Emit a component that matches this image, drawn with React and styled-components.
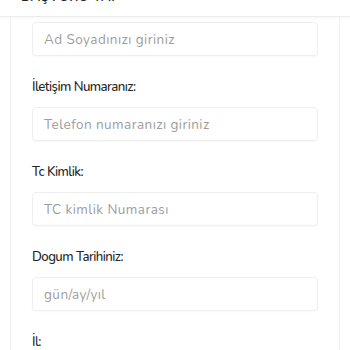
import React from "react";
import styled, { createGlobalStyle } from "styled-components";

const Global = createGlobalStyle`
  html, body { margin: 0; padding: 0; background: #ffffff; }
  body { font-family: "Nunito", Lato, "Noto Sans", sans-serif; overflow: hidden; }
`;

const Header = styled.header`
  height: 16px;
  overflow: hidden;
  background: #fff;
  border-bottom: 1px solid #ececec;
  box-shadow: 0 1px 3px rgba(0,0,0,0.04);
  padding-left: 21px;
  position: relative;
  z-index: 1;
`;

const HeaderTitle = styled.div`
  margin-top: -9px;
  font-size: 13px;
  font-weight: 700;
  letter-spacing: 0.6px;
  color: #222;
  line-height: 12px;
`;

const Card = styled.main`
  margin: 0 10px;
  border-left: 1px solid #f0f0f0;
  border-right: 1px solid #f0f0f0;
  padding: 5px 21px 20px;
  background: #fff;
`;

const Field = styled.div`
  display: flex;
  flex-direction: column;
  padding-top: ${(p) => (p.$first ? "0" : "21px")};
`;

const Label = styled.label`
  font-size: 13.2px;
  font-weight: 500;
  letter-spacing: -0.55px;
  color: #262626;
  line-height: 20px;
  margin-bottom: 10px;
`;

const Input = styled.input`
  box-sizing: border-box;
  height: 34px;
  width: 100%;
  border: 1px solid #efefef;
  border-radius: 4px;
  box-shadow: 0 1px 2px rgba(0,0,0,0.03);
  padding: 0 11px;
  font-family: inherit;
  font-size: 13.5px;
  letter-spacing: 0.45px;
  color: #333;
  background: #fff;
  outline: none;
  &::placeholder { color: #9d9d9d; }
`;

const fields = [
  { label: null, placeholder: "Ad Soyadınızı giriniz" },
  { label: "İletişim Numaranız:", placeholder: "Telefon numaranızı giriniz" },
  { label: "Tc Kimlik:", placeholder: "TC kimlik Numarası" },
  { label: "Dogum Tarihiniz:", placeholder: "gün/ay/yıl" },
];

export default function App() {
  return (
    <>
      <Global />
      <Header>
        <HeaderTitle>BAŞVURU YAP</HeaderTitle>
      </Header>
      <Card>
        {fields.map((f, i) => (
          <Field key={i} $first={i === 0}>
            {f.label && <Label>{f.label}</Label>}
            <Input placeholder={f.placeholder} />
          </Field>
        ))}
        <Field>
          <Label>İl:</Label>
        </Field>
      </Card>
    </>
  );
}
